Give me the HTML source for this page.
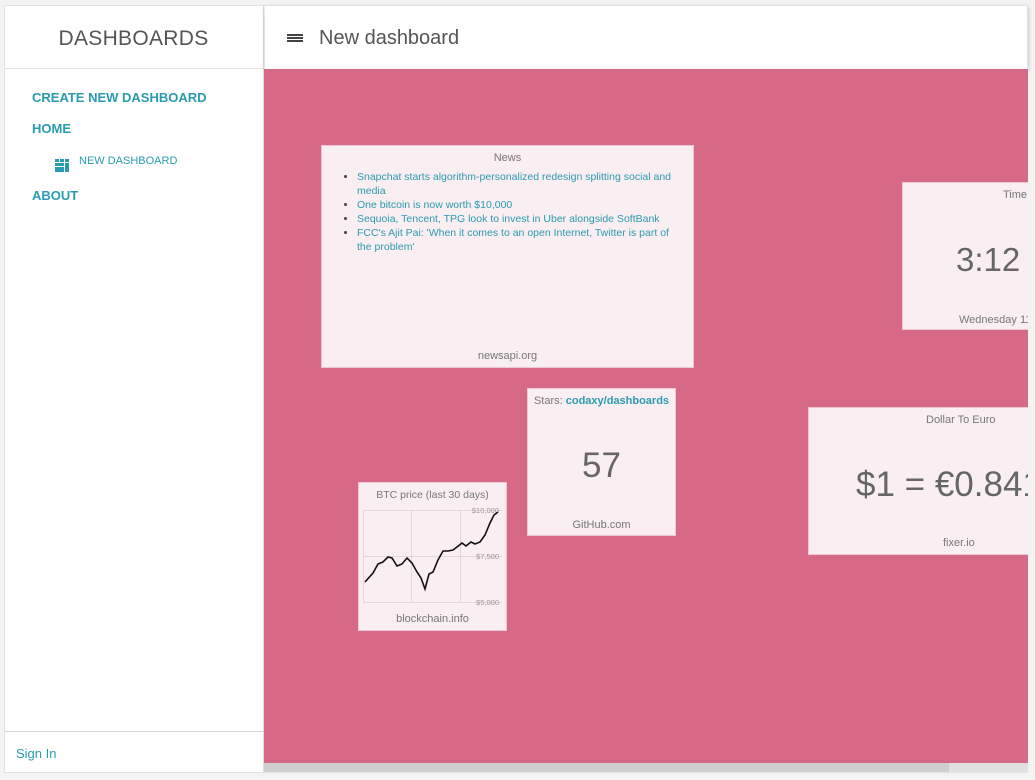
<!DOCTYPE html>
<html><head><meta charset="utf-8"><style>
*{margin:0;padding:0;box-sizing:border-box}
body{width:1035px;height:780px;background:#f3f3f3;font-family:"Liberation Sans",sans-serif;position:relative;overflow:hidden}
.frame{position:absolute;left:4px;top:5px;width:1024px;height:768px;background:#fff;border:1px solid #e2e2e2}
.side{position:absolute;left:4px;top:5px;width:260px;height:768px;border-right:1px solid #e0e0e0}
.abs{position:absolute}
.nav{color:#2a9bb0;font-size:13px;font-weight:bold}
.main{position:absolute;left:264px;top:69px;width:764px;height:694px;background:#d66985;overflow:hidden}
.card{position:absolute;background:#f9eef2;border:1px solid #eec5d2;color:#666;text-align:center}
.t{font-size:11px;color:#777}
.link{color:#2a9bb0}
ul{font-size:10.5px;text-align:left;color:#444;margin-left:35px;width:315px;line-height:14px}
ul li span{color:#2a9bb0}
.big{color:#666}
</style></head><body>
<div class="frame"></div>
<div class="side">
  <div class="abs" style="left:0;top:0;width:259px;height:64px;border-bottom:1px solid #e4e4e4;text-align:center;font-size:21px;color:#555;line-height:68px;letter-spacing:.3px">DASHBOARDS</div>
  <div class="abs nav" style="left:28px;top:85px">CREATE NEW DASHBOARD</div>
  <div class="abs nav" style="left:28px;top:116px">HOME</div>
  <svg class="abs" style="left:51px;top:154px" width="14" height="13"><g fill="#2a9bb0"><rect x="0" y="0" width="4" height="3"/><rect x="5" y="0" width="4" height="3"/><rect x="10" y="0" width="4" height="3"/><rect x="0" y="4" width="9" height="3"/><rect x="10" y="4" width="4" height="9"/><rect x="0" y="8" width="9" height="5"/></g></svg>
  <div class="abs" style="left:75px;top:150px;color:#2a9bb0;font-size:11px">NEW DASHBOARD</div>
  <div class="abs nav" style="left:28px;top:183px">ABOUT</div>
  <div class="abs" style="left:0;top:726px;width:259px;border-top:1px solid #d4d4d4"></div>
  <div class="abs" style="left:12px;top:741px;color:#2a9bb0;font-size:13px">Sign In</div>
</div>
<div class="abs" style="left:265px;top:5px;width:763px;height:64px;box-shadow:0 2px 4px rgba(0,0,0,.25)">
  <div class="abs" style="left:22px;top:29px;width:16px;height:2px;background:#444;box-shadow:0 3px 0 #444,0 6px 0 #444"></div>
  <div class="abs" style="left:54px;top:22px;font-size:20px;color:#555">New dashboard</div>
</div>
<div class="main">
  <div class="card" style="left:57px;top:76px;width:373px;height:223px">
    <div class="t" style="margin-top:6px">News</div>
    <ul style="margin-top:6px"><li><span>Snapchat starts algorithm-personalized redesign splitting social and media</span></li><li><span>One bitcoin is now worth $10,000</span></li><li><span>Sequoia, Tencent, TPG look to invest in Uber alongside SoftBank</span></li><li><span>FCC's Ajit Pai: 'When it comes to an open Internet, Twitter is part of the problem'</span></li></ul>
    <div class="abs t" style="left:0;right:0;top:204px">newsapi.org</div>
  </div>
  <div class="card" style="left:638px;top:113px;width:140px;height:148px;text-align:left">
    <div class="abs t" style="left:100px;top:6px">Time</div>
    <div class="abs big" style="left:53px;top:58px;font-size:33px;white-space:nowrap">3:12 PM</div>
    <div class="abs t" style="left:56px;top:131px;white-space:nowrap">Wednesday 11, 2017</div>
  </div>
  <div class="card" style="left:263px;top:319px;width:149px;height:148px">
    <div class="t" style="margin-top:6px">Stars: <b class="link">codaxy/dashboards</b></div>
    <div class="abs big" style="left:0;right:0;top:57px;font-size:35px">57</div>
    <div class="abs t" style="left:0;right:0;top:130px">GitHub.com</div>
  </div>
  <div class="card" style="left:94px;top:413px;width:149px;height:149px">
    <div class="t" style="margin-top:6px;font-size:10.5px">BTC price (last 30 days)</div>
    <div class="abs t" style="left:0;right:0;top:130px">blockchain.info</div>
  </div>
  <div class="card" style="left:544px;top:338px;width:230px;height:148px;text-align:left">
    <div class="abs t" style="left:117px;top:6px">Dollar To Euro</div>
    <div class="abs big" style="left:47px;top:57px;font-size:35px;white-space:nowrap">$1 = €0.8412</div>
    <div class="abs t" style="left:134px;top:129px">fixer.io</div>
  </div>
</div>
<svg class="abs" style="left:0;top:0" width="1035" height="780">
  <g stroke="#e6d6dc" stroke-width="1" fill="none">
    <line x1="363.5" y1="510" x2="363.5" y2="603"/><line x1="411.5" y1="510" x2="411.5" y2="603"/><line x1="460.5" y1="510" x2="460.5" y2="603"/>
    <line x1="363" y1="510.5" x2="502" y2="510.5"/><line x1="363" y1="556.5" x2="502" y2="556.5"/><line x1="363" y1="602.5" x2="502" y2="602.5"/>
  </g>
  <g font-family="Liberation Sans" font-size="7.5" fill="#999" text-anchor="end"><text x="499" y="513">$10,000</text><text x="499" y="559">$7,500</text><text x="499" y="605">$5,000</text></g>
  <polyline fill="none" stroke="#111" stroke-width="1.6" points="365,582 373,573 378,564 383,562 388,557 392,558 397,566 402,564 407,558 412,563 417,572 421,578 425,589 429,574 433,572 438,560 443,551 448,551 453,550 457,547 462,543 466,546 471,542 475,544 480,542 485,535 490,523 494,515 498,512"/>
  <rect x="264" y="763" width="764" height="9" fill="#e0e0e0"/>
  <rect x="264" y="763" width="685" height="9" fill="#cfcfcf"/>
</svg>
</body></html>
